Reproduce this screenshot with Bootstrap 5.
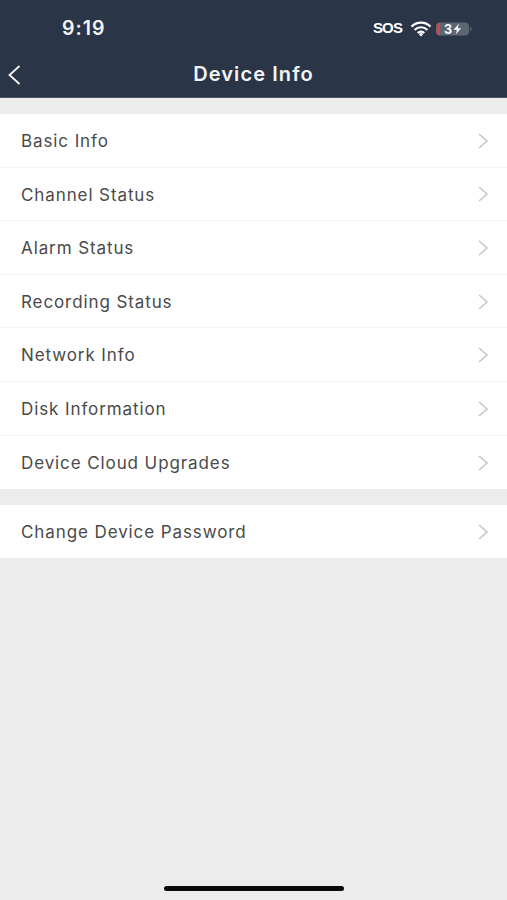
<!DOCTYPE html>
<html lang="en">
<head>
<meta charset="utf-8">
<title>Device Info</title>
<link rel="stylesheet" href="https://cdn.jsdelivr.net/npm/bootstrap@5.3.0/dist/css/bootstrap.min.css">
<style>
html, body { height: 100%; }
body { background: #ececec; font-family: Inter, "Liberation Sans", sans-serif; overflow: hidden; }
.phone { height: 900px; }
.top-head { background: #2a3647; height: 98px; color: #fff; border-bottom: 1px solid #4a5560; }
.stat-bar { height: 50px; padding: 7px 35px 0 62px; }
.clock { font-size: 19.5px; font-weight: 600; letter-spacing: 1px; color: #f4f5f6; }
.sos { font-size: 15px; font-weight: 700; letter-spacing: -.9px; font-family: "Liberation Sans", sans-serif; }
.nav-row { height: 47px; padding: 2px 0 0 7px; }
.nav-title { font-size: 20px; font-weight: 600; letter-spacing: 1.1px; color: #f4f5f6; }
.back-link { width: 16px; line-height: 0; z-index: 1; }
.group-list { margin-top: 16px; }
.item-row { height: 53.6px; padding: 3px 17px 0 21px; border: 0; border-bottom: 1px solid #f3f3f3; border-radius: 0 !important; color: #4a4a4a; font-size: 17px; letter-spacing: .9px; background: #fff; }
.item-row:last-child { border-bottom: 0; height: 53px; }
.arrow { width: 13px; height: 18px; flex: none; margin-top: -2px; }
.home-bar { width: 180px; height: 5px; background: #0a0a0a; border-radius: 3px; left: 164px; top: 886px; }
</style>
</head>
<body>
<div class="phone position-relative d-flex flex-column">
  <header class="top-head">
    <div class="stat-bar d-flex justify-content-between align-items-center">
      <span class="clock">9:19</span>
      <div class="d-flex align-items-center gap-1">
        <span class="sos me-1">SOS</span>
        <svg width="22" height="16" viewBox="0 0 22 16" aria-hidden="true"><path d="M1.500 5.600a13.500 13.500 0 0 1 19 0M4.600 8.900a9 9 0 0 1 12.800 0M7.700 12a4.600 4.600 0 0 1 6.600 0" fill="none" stroke="#fff" stroke-width="2.200"/><path d="M8.800 13.200 11 15.400l2.200-2.200a3 3 0 0 0-4.400 0z" fill="#fff"/></svg>
        <svg width="36" height="16" viewBox="0 0 36 16" aria-hidden="true"><rect x="0" y="1.500" width="33" height="13" rx="4" fill="#5d6673"/><path d="M4 1.500a4 4 0 0 0-3.400 3v7a4 4 0 0 0 3.400 3z" fill="#c8494c"/><path d="M34 6v4c1-.3 1.600-1 1.600-2s-.6-1.700-1.600-2z" fill="#5d6673"/><text x="8" y="12.700" font-family="Inter, sans-serif" font-size="12.500" font-weight="700" fill="#fff">3</text><path d="M23 2.800 17.500 8.800h3.500l-1.200 4.400 5.400-6h-3.500z" fill="#fff"/></svg>
      </div>
    </div>
    <div class="nav-row position-relative d-flex align-items-center">
      <a href="#" class="back-link d-block" aria-label="Back"><svg width="15" height="22" viewBox="0 0 15 22"><path d="M12.500 2 2.500 11l10 9" fill="none" stroke="#f4f5f6" stroke-width="1.800"/></svg></a>
      <div class="nav-title position-absolute top-50 start-50 translate-middle text-nowrap">Device Info</div>
    </div>
  </header>
  <div class="list-group list-group-flush group-list">
    <a href="#" class="list-group-item item-row d-flex align-items-center justify-content-between text-decoration-none"><span>Basic Info</span><svg class="arrow" viewBox="0 0 13 18"><path d="M2 2l8 7-8 7" fill="none" stroke="#c6c6c6" stroke-width="1.600"/></svg></a>
    <a href="#" class="list-group-item item-row d-flex align-items-center justify-content-between text-decoration-none"><span>Channel Status</span><svg class="arrow" viewBox="0 0 13 18"><path d="M2 2l8 7-8 7" fill="none" stroke="#c6c6c6" stroke-width="1.600"/></svg></a>
    <a href="#" class="list-group-item item-row d-flex align-items-center justify-content-between text-decoration-none"><span>Alarm Status</span><svg class="arrow" viewBox="0 0 13 18"><path d="M2 2l8 7-8 7" fill="none" stroke="#c6c6c6" stroke-width="1.600"/></svg></a>
    <a href="#" class="list-group-item item-row d-flex align-items-center justify-content-between text-decoration-none"><span>Recording Status</span><svg class="arrow" viewBox="0 0 13 18"><path d="M2 2l8 7-8 7" fill="none" stroke="#c6c6c6" stroke-width="1.600"/></svg></a>
    <a href="#" class="list-group-item item-row d-flex align-items-center justify-content-between text-decoration-none"><span>Network Info</span><svg class="arrow" viewBox="0 0 13 18"><path d="M2 2l8 7-8 7" fill="none" stroke="#c6c6c6" stroke-width="1.600"/></svg></a>
    <a href="#" class="list-group-item item-row d-flex align-items-center justify-content-between text-decoration-none"><span>Disk Information</span><svg class="arrow" viewBox="0 0 13 18"><path d="M2 2l8 7-8 7" fill="none" stroke="#c6c6c6" stroke-width="1.600"/></svg></a>
    <a href="#" class="list-group-item item-row d-flex align-items-center justify-content-between text-decoration-none"><span>Device Cloud Upgrades</span><svg class="arrow" viewBox="0 0 13 18"><path d="M2 2l8 7-8 7" fill="none" stroke="#c6c6c6" stroke-width="1.600"/></svg></a>
  </div>
  <div class="list-group list-group-flush group-list">
    <a href="#" class="list-group-item item-row d-flex align-items-center justify-content-between text-decoration-none"><span>Change Device Password</span><svg class="arrow" viewBox="0 0 13 18"><path d="M2 2l8 7-8 7" fill="none" stroke="#c6c6c6" stroke-width="1.600"/></svg></a>
  </div>
  <div class="home-bar position-absolute"></div>
</div>
<script src="https://cdn.jsdelivr.net/npm/bootstrap@5.3.0/dist/js/bootstrap.bundle.min.js"></script>
</body>
</html>
